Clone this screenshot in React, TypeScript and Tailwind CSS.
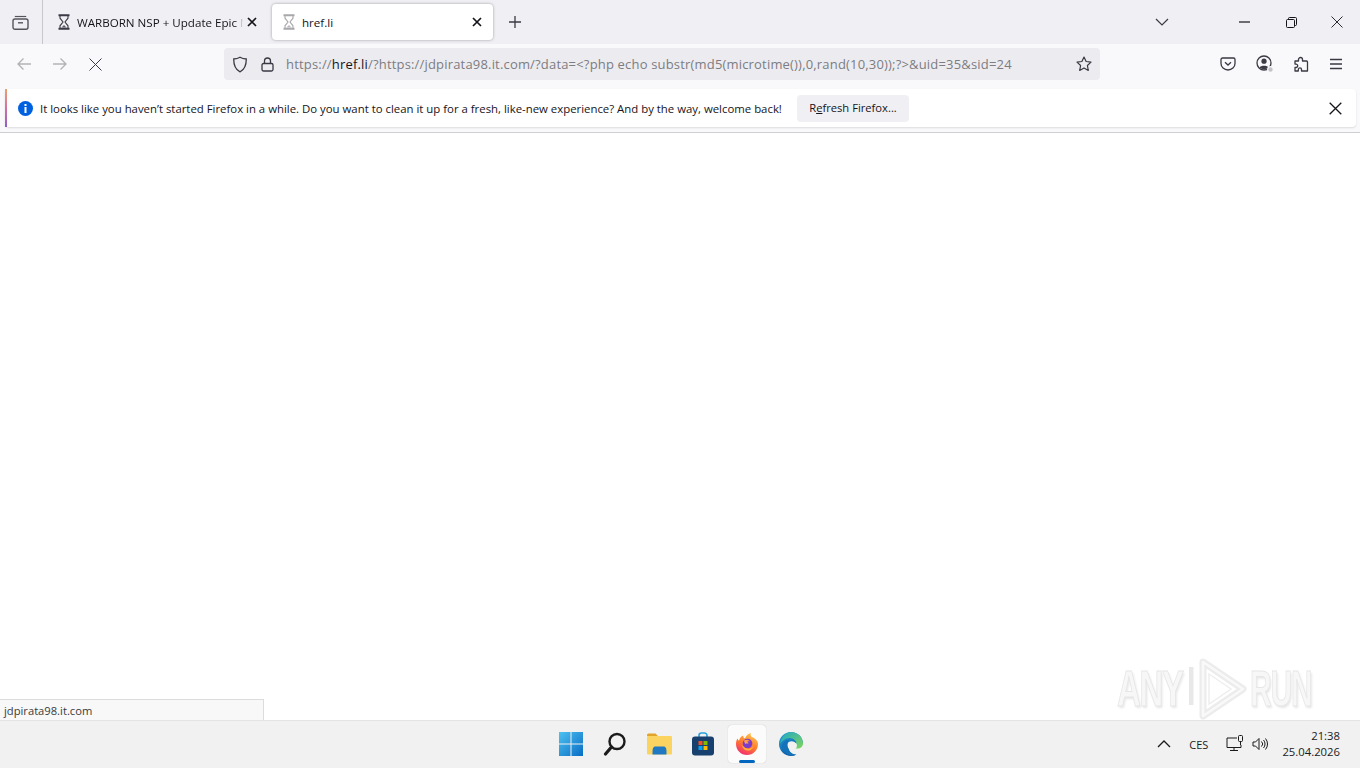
import React from "react";

function Hourglass({ color }: { color: string }) {
  return (
    <svg width="14" height="16" viewBox="0 0 14 16" fill="none" stroke={color} strokeWidth="1.100" className="shrink-0">
      <path d="M1.500 1.200h11M1.500 14.800h11" strokeWidth="2" />
      <path d="M3 2v2.200L6 8l-3 3.800V14M11 2v2.200L8 8l3 3.800V14" />
      <path d="M4.500 13.600L7 11l2.500 2.600z" fill={color} stroke="none" opacity="0.8" />
    </svg>
  );
}

function TabClose() {
  return (
    <svg width="10" height="10" viewBox="0 0 10 10" stroke="#15141a" strokeWidth="1.700" className="shrink-0">
      <path d="M1 1l8 8M9 1l-8 8" />
    </svg>
  );
}

function TaskIcon({ children, active }: { children: React.ReactNode; active?: boolean }) {
  return (
    <div className={`relative w-[38px] h-[38px] flex items-center justify-center rounded ${active ? "bg-[#fbfbfb] shadow-[0_0_1px_rgba(0,0,0,0.25)]" : ""}`}>
      {children}
      {active && <div className="absolute bottom-0 left-[11px] w-[16px] h-[3px] rounded-sm bg-[#0067c0]" />}
    </div>
  );
}

export default function App() {
  return (
    <div className="relative w-[1360px] h-[768px] overflow-hidden bg-white flex flex-col font-['Open_Sans','Noto_Sans',sans-serif] text-[#15141a]">
      {/* Tab strip */}
      <div className="h-[44px] shrink-0 bg-[#f0f0f4] flex items-stretch">
        <div className="w-[43px] shrink-0 border-r border-[#c8c8cc] flex items-center justify-center pr-[2px]">
          <svg width="17" height="16" viewBox="0 0 17 16" fill="none" stroke="#55545c" strokeWidth="1.400">
            <rect x="1" y="5" width="15" height="10.300" rx="2" />
            <path d="M2.800 2.500h11.400" strokeWidth="1.200" />
            <path d="M6 8.800h5" />
          </svg>
        </div>
        <div className="w-[229px] shrink-0 flex items-center pl-[14px]">
          <Hourglass color="#3a3944" />
          <span className="ml-[6px] pt-[1px] text-[11.600px] w-[166px] overflow-hidden whitespace-nowrap [mask-image:linear-gradient(to_right,black_96%,transparent)]">WARBORN NSP + Update Epic M</span>
          <span className="ml-[4px]"><TabClose /></span>
        </div>
        <div className="w-[221px] shrink-0 my-[4px] h-[36px] bg-white rounded-[4px] shadow-[0_0_3px_rgba(0,0,0,0.35)] flex items-center pl-[10px] pr-[11px]">
          <Hourglass color="#a8a8ac" />
          <span className="ml-[6px] pt-[1px] text-[11.600px] flex-1">href.li</span>
          <TabClose />
        </div>
        <div className="w-[44px] shrink-0 flex items-center justify-center">
          <svg width="14" height="14" viewBox="0 0 14 14" stroke="#3a3944" strokeWidth="1.300"><path d="M7 1v12M1 7h12" /></svg>
        </div>
        <div className="flex-1" />
        <div className="w-[46px] flex items-center justify-center mr-[37px]">
          <svg width="14" height="8" viewBox="0 0 14 8" fill="none" stroke="#3a3944" strokeWidth="1.200"><path d="M1 1l6 6 6-6" /></svg>
        </div>
        <div className="w-[46px] flex items-center justify-center">
          <svg width="12" height="2" viewBox="0 0 12 2" stroke="#15141a" strokeWidth="1.200"><path d="M0 1h11" /></svg>
        </div>
        <div className="w-[46px] flex items-center justify-center">
          <svg width="11" height="11" viewBox="0 0 11 11" fill="none" stroke="#15141a" strokeWidth="1"><rect x="0.500" y="2.500" width="8" height="8" rx="1" /><path d="M2.500 2.500V1.500a1 1 0 011-1h6a1 1 0 011 1v6a1 1 0 01-1 1h-1" /></svg>
        </div>
        <div className="w-[46px] flex items-center justify-center">
          <svg width="12" height="12" viewBox="0 0 12 12" stroke="#15141a" strokeWidth="0.900"><path d="M0.500 0.500l11 11M11.500 0.500l-11 11" /></svg>
        </div>
      </div>

      {/* Nav bar */}
      <div className="h-[44px] shrink-0 bg-[#f9f9fb] flex items-center pb-[4px]">
        <div className="w-[224px] shrink-0 flex items-center pl-[16px]">
          <svg width="16" height="14" viewBox="0 0 16 14" fill="none" stroke="#b4b4b8" strokeWidth="1.400"><path d="M15 7H2M7.500 1.500L2 7l5.500 5.500" /></svg>
          <svg width="16" height="14" viewBox="0 0 16 14" fill="none" stroke="#b4b4b8" strokeWidth="1.400" className="ml-[20px]"><path d="M1 7h13M8.500 1.500L14 7l-5.500 5.500" /></svg>
          <svg width="13" height="13" viewBox="0 0 13 13" stroke="#3a3944" strokeWidth="1" className="ml-[21px]"><path d="M0.500 0.500l12 12M12.500 0.500l-12 12" /></svg>
        </div>
        <div className="w-[876px] h-[32px] shrink-0 bg-[#ececf0] rounded-[4px] flex items-center">
          <svg width="16" height="17" viewBox="0 0 16 17" fill="none" stroke="#3a3944" strokeWidth="1.300" className="ml-[8px]"><path d="M8 1.200c2 1.200 4 1.700 6.300 1.800 0 6-1.400 10.500-6.300 12.800C3.100 13.500 1.700 9 1.700 3 4 2.900 6 2.400 8 1.200z" /></svg>
          <svg width="13" height="15" viewBox="0 0 13 15" fill="none" stroke="#3a3944" strokeWidth="1.300" className="ml-[13px]"><rect x="1" y="6.500" width="11" height="7.500" rx="1.500" /><path d="M3.500 6.500V4a3 3 0 016 0v2.500" /></svg>
          <div className="ml-[12px] pt-[1px] w-[730px] text-[13px] tracking-[0.18px] whitespace-nowrap text-[#7c7c82]">
            https://<span className="text-[#15141a]">href.li</span>/?https://jdpirata98.it.com/?data=&lt;?php echo substr(md5(microtime()),0,rand(10,30));?&gt;&amp;uid=35&amp;sid=24
          </div>
          <div className="flex-1" />
          <svg width="16" height="16" viewBox="0 0 16 16" fill="none" stroke="#3a3944" strokeWidth="1.200" className="mr-[8px]"><path d="M8 1l2.100 4.500 4.900.6-3.600 3.400.9 4.900L8 11.900 3.700 14.400l.9-4.900L1 6.100l4.900-.6z" strokeLinejoin="round" /></svg>
        </div>
        <div className="flex-1 flex items-center justify-end gap-[20px] pr-[18px]">
          <svg width="16" height="14" viewBox="0 0 16 14" fill="none" stroke="#3a3944" strokeWidth="1.300"><path d="M2.500 1h11A1.500 1.500 0 0115 2.500v4a7 6.500 0 01-14 0v-4A1.500 1.500 0 012.500 1z" /><path d="M5 5.200l3 2.800 3-2.800" /></svg>
          <svg width="18" height="18" viewBox="0 0 18 18" fill="none" stroke="#3a3944" strokeWidth="1.300">
            <circle cx="8" cy="8" r="7" />
            <circle cx="8" cy="6.200" r="2.600" fill="#3a3944" stroke="none" />
            <path d="M3.500 12.500c1-2.300 8-2.300 9 0-2 2.300-7 2.300-9 0z" fill="#3a3944" stroke="none" />
            <circle cx="14.500" cy="14.500" r="2.800" fill="#c4c4c8" stroke="#f9f9fb" strokeWidth="1.200" />
          </svg>
          <svg width="15" height="16" viewBox="0 0 15 16" fill="none" stroke="#3a3944" strokeWidth="1.300"><path d="M1 5h3.500V3.500a2 2 0 014 0V5H12.500a1 1 0 011 1v9H7.500v-1.500a1.600 1.600 0 00-3.200 0V15H1v-3.500h1a1.700 1.700 0 000-3.400H1z" strokeLinejoin="round" /></svg>
          <svg width="14" height="12" viewBox="0 0 14 12" stroke="#3a3944" strokeWidth="1.300" className="-mr-[1px]"><path d="M1 1.500h12M1 6h12M1 10.500h12" /></svg>
        </div>
      </div>

      {/* Notification */}
      <div className="h-[45px] shrink-0 bg-[#f9f9fb] border-b border-[#cfcfd3] pl-[5px] pr-[4px] pt-[1px]">
        <div className="h-[38px] bg-white rounded-[4px] shadow-[0_1px_2px_rgba(0,0,0,0.12)] flex items-center relative pl-[13px]">
          <div className="absolute left-0 top-0 bottom-0 w-[2px] bg-gradient-to-b from-[#e8a16a] via-[#d76e9e] to-[#8f5cc9]" />
          <div className="w-[15px] h-[15px] rounded-full bg-[#0060df] flex items-center justify-center shrink-0">
            <svg width="3" height="9" viewBox="0 0 3 9" fill="white"><rect x="0.500" y="0" width="2" height="2" /><rect x="0.500" y="3" width="2" height="6" /></svg>
          </div>
          <span className="ml-[7px] pt-[1px] text-[11.380px] whitespace-nowrap w-[757px]">It looks like you haven’t started Firefox in a while. Do you want to clean it up for a fresh, like-new experience? And by the way, welcome back!</span>
          <div className="w-[112px] h-[27px] pt-[1px] bg-[#f0f0f4] rounded-[4px] flex items-center justify-center text-[11.200px] whitespace-nowrap">
            <span>R<span className="underline">e</span>fresh Firefox...</span>
          </div>
          <div className="flex-1" />
          <svg width="13" height="13" viewBox="0 0 13 13" stroke="#15141a" strokeWidth="1.300" className="mr-[14px]"><path d="M0.700 0.700l11.600 11.600M12.300 0.700L0.700 12.300" /></svg>
        </div>
      </div>

      {/* Page */}
      <div className="flex-1 bg-white" />

      {/* Status panel */}
      <div className="absolute left-0 top-[699px] w-[264px] h-[21px] bg-[#f8f8f8] border-t border-r border-[#dcdcdc] pl-[4px] text-[11.200px] leading-[22px] text-[#3a3a3a]">
        jdpirata98.it.com
      </div>

      {/* Watermark */}
      <div className="absolute left-[1117px] top-[657px] w-[200px] h-[64px] flex items-center pointer-events-none">
        <span className="w-[72px] h-[40px] leading-[40px] text-[50px] font-bold font-['Liberation_Sans',sans-serif] text-[#f7f7f7] [-webkit-text-stroke:1px_#e6e6e6] [text-shadow:2px_2px_3px_rgba(0,0,0,0.10)] tracking-[-2px] scale-x-[0.66] origin-left whitespace-nowrap">ANY</span>
        <svg width="58" height="64" viewBox="0 0 58 64" fill="none" className="shrink-0">
          <path d="M2 10v38" stroke="#e8e8e8" strokeWidth="5" />
          <path d="M14 5l40 27-40 27z" stroke="#ececec" strokeWidth="7" strokeLinejoin="round" />
          <path d="M14 5l40 27-40 27z" stroke="#f9f9f9" strokeWidth="2.500" strokeLinejoin="round" />
          <path d="M20 17l22 15-22 15z" stroke="#eeeeee" strokeWidth="1.500" />
        </svg>
        <span className="ml-[3px] h-[40px] leading-[40px] text-[50px] font-bold font-['Liberation_Sans',sans-serif] text-[#f7f7f7] [-webkit-text-stroke:1px_#e6e6e6] [text-shadow:2px_2px_3px_rgba(0,0,0,0.10)] tracking-[-2px] scale-x-[0.6] origin-left whitespace-nowrap">RUN</span>
      </div>

      {/* Taskbar */}
      <div className="relative h-[48px] shrink-0 bg-[#f1f1f1] border-t border-[#e4e4e4] flex items-center pb-[2px]">
        <div className="flex items-center gap-[6px] ml-[552px]">
          <TaskIcon>
            <svg width="24" height="24" viewBox="0 0 24 24">
              <defs><linearGradient id="win" x1="0" y1="0" x2="1" y2="1"><stop offset="0" stopColor="#4cc2f1" /><stop offset="1" stopColor="#0a6cc4" /></linearGradient></defs>
              <path fill="url(#win)" d="M0 0h11.500v11.500H0zM12.500 0H24v11.500H12.500zM0 12.500h11.500V24H0zM12.500 12.500H24V24H12.500z" />
            </svg>
          </TaskIcon>
          <TaskIcon>
            <svg width="24" height="24" viewBox="0 0 24 24" fill="none" stroke="#1b1b1b"><circle cx="14" cy="9.500" r="7.500" strokeWidth="2.400" /><path d="M8.500 15L2.500 22" strokeWidth="3.200" strokeLinecap="round" /></svg>
          </TaskIcon>
          <TaskIcon>
            <svg width="25" height="22" viewBox="0 0 25 22">
              <path d="M0 2a1.500 1.500 0 011.500-1.500h7L11 3h-11z" fill="#e0a42a" />
              <rect x="0" y="3" width="25" height="18.500" rx="1" fill="#fbd360" />
              <path d="M5.500 19c0-4 1-5.500 3-5.500h8c2 0 3 1.500 3 5.500v2.500h-14z" fill="#1f78c1" />
            </svg>
          </TaskIcon>
          <TaskIcon>
            <svg width="24" height="24" viewBox="0 0 24 24">
              <path d="M8 5V3.500A2.500 2.500 0 0110.500 1h3A2.500 2.500 0 0116 3.500V5" fill="none" stroke="#2aa0dc" strokeWidth="1.600" />
              <rect x="1" y="4.500" width="22" height="19" rx="3" fill="#17406f" />
              <rect x="7.500" y="9" width="4" height="4" fill="#f25022" />
              <rect x="12.500" y="9" width="4" height="4" fill="#7fba00" />
              <rect x="7.500" y="14" width="4" height="4" fill="#00a4ef" />
              <rect x="12.500" y="14" width="4" height="4" fill="#ffb900" />
            </svg>
          </TaskIcon>
          <TaskIcon active>
            <svg width="24" height="24" viewBox="0 0 24 24">
              <defs>
                <linearGradient id="ffa" x1="0.700" y1="0" x2="0.200" y2="1"><stop offset="0" stopColor="#ffc64f" /><stop offset="0.500" stopColor="#ff7a2c" /><stop offset="1" stopColor="#f0257a" /></linearGradient>
              </defs>
              <path fill="url(#ffa)" d="M12 23C5.900 23 1 18.100 1 12c0-2 .5-4 1.500-5.500.3 1 .8 1.800 1.500 2.300C4.500 6 6.500 4.200 8 3.500 8 5 9 6 10 6.500 11 3.500 13.500 1.500 16 1c-.7 1.800-.3 3 .8 4C20.500 6.500 23 9 23 12c0 6.100-4.900 11-11 11z" />
              <circle cx="12.500" cy="11.500" r="4.800" fill="#7b3cc9" />
              <path d="M7 13c.5 4 4 6 7 5.500 2.500-.4 4-2.500 4.500-4.500-1.500 2-4 3-6.500 2.500-2-.4-3.500-1.500-5-3.500z" fill="#ffb13d" />
              <path d="M9 8.500c2-1.500 5-1 6 1-1.200-.5-2.200-.5-3 0 1 .4 1.600 1.200 1.300 2.300-.8-.3-2-.3-2.800.2-.7-1-1.500-2.200-1.500-3.500z" fill="#ff9d4a" />
            </svg>
          </TaskIcon>
          <TaskIcon>
            <svg width="26" height="26" viewBox="0 0 26 26">
              <defs>
                <linearGradient id="edb" x1="0.200" y1="0" x2="0.700" y2="1"><stop offset="0" stopColor="#1f9fd8" /><stop offset="1" stopColor="#0c4f9c" /></linearGradient>
                <linearGradient id="edg" x1="0" y1="0" x2="1" y2="1"><stop offset="0" stopColor="#1fa8c8" /><stop offset="1" stopColor="#7fd65a" /></linearGradient>
              </defs>
              <path d="M1 13C1 6 6.500 1 13 1c6.500 0 12 5 12 11.500H10C10 16 11 24.500 18 23.800 16.500 24.600 14.800 25 13 25 6.500 25 1 19.500 1 13z" fill="url(#edb)" />
              <path d="M13 1c6.500 0 12 5 12 11.500 0 3-2.500 5-5.500 5-2 0-3.200-.5-4-1.300 2-.2 3-1.700 3-3.200 0-3-3-6-7-6-4 0-8 3-9.500 6C3.500 6 7.500 1 13 1z" fill="url(#edg)" />
              <ellipse cx="14" cy="14.500" rx="5" ry="4.200" fill="#f1f1f1" transform="rotate(15 14 14.500)" />
              <path d="M9.500 14c0 5 3.500 9 9 9.800-6 2.500-13-1-14.500-8C4 11 8 8.500 11 9 9.800 10.500 9.500 12 9.500 14z" fill="#1372b9" />
            </svg>
          </TaskIcon>
        </div>
        <div className="flex-1" />
        <div className="flex items-center pr-[20px]">
          <svg width="14" height="9" viewBox="0 0 14 9" fill="none" stroke="#1b1b1b" strokeWidth="1.300"><path d="M1 8l6-6 6 6" /></svg>
          <span className="ml-[18px] pt-[3px] text-[11px] text-[#1b1b1b]">CES</span>
          <svg width="18" height="17" viewBox="0 0 18 17" fill="none" stroke="#1b1b1b" strokeWidth="1" className="ml-[18px]">
            <path d="M11 3H1v9.500h14V10" /><path d="M8 12.500v3M4 15.500h8" /><rect x="12.500" y="0.500" width="4" height="6" rx="1" /><path d="M14.500 6.500V10" />
          </svg>
          <svg width="17" height="14" viewBox="0 0 17 14" fill="none" stroke="#1b1b1b" strokeWidth="1" className="ml-[8px]">
            <path d="M1 5h2.500L7 1.500v11L3.500 9H1z" /><path d="M9.500 4.500a3.500 3.500 0 010 5M11.500 3a6 6 0 010 8M13.500 1.500a8.500 8.500 0 010 11" />
          </svg>
          <div className="ml-[13px] flex flex-col items-end text-[11.300px] leading-[16px] text-[#1b1b1b]">
            <span>21:38</span>
            <span>25.04.2026</span>
          </div>
        </div>
      </div>
    </div>
  );
}
